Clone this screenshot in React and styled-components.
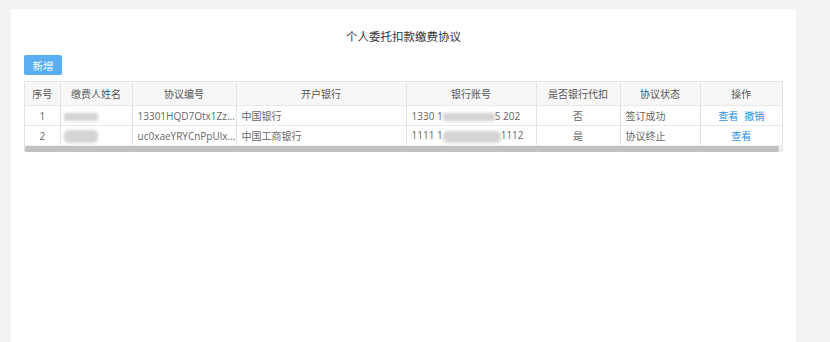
import React from 'react'
import styled, { createGlobalStyle } from 'styled-components'

const GlobalStyle = createGlobalStyle`
  html, body {
    margin: 0;
    padding: 0;
    background: #f3f3f3;
    font-family: 'Open Sans', 'Noto Sans CJK SC', sans-serif;
  }
`

const Page = styled.div`
  display: flex;
  padding: 9px 34px 0 11px;
  height: 342px;
  box-sizing: border-box;
  overflow: hidden;
`

const Panel = styled.div`
  flex: 1;
  background: #fff;
  padding: 20px 13px 0 13px;
  min-height: 333px;
`

const Title = styled.div`
  text-align: center;
  font-size: 11.5px;
  color: #333;
  line-height: 16px;
  height: 26px;
`

const Button = styled.button`
  width: 38px;
  height: 20px;
  border: none;
  border-radius: 2px;
  background: #5aaef2;
  color: #fff;
  font-family: inherit;
  font-size: 10.5px;
  padding: 0;
  display: block;
`

const TableWrap = styled.div`
  margin-top: 6px;
  width: 759px;
  border: 1px solid #e4e4e4;
  border-bottom: none;
  box-sizing: border-box;
`

const Table = styled.table`
  border-collapse: collapse;
  table-layout: fixed;
  width: 100%;
  font-size: 10px;
`

const Th = styled.th`
  height: 23px;
  background: #f7f7f7;
  color: #555;
  font-weight: normal;
  border-left: 1px solid #e4e4e4;
  padding: 0;
  text-align: center;
  &:first-child { border-left: none; }
`

const Td = styled.td`
  height: 19px;
  color: #666;
  border-left: 1px solid #e4e4e4;
  border-top: 1px solid #e8e8e8;
  padding: 0 5px;
  text-align: ${({ $align }) => $align || 'left'};
  white-space: nowrap;
  overflow: hidden;
  &:first-child { border-left: none; }
`

const Blur = styled.span`
  display: inline-block;
  vertical-align: middle;
  width: ${({ $w }) => $w}px;
  height: ${({ $h }) => $h || 9}px;
  background: #d4d4d4;
  filter: blur(1.5px);
  border-radius: ${({ $round }) => ($round ? '5px' : '1px')};
`

const Link = styled.span`
  color: #2f90df;
  margin: 0 3px;
  cursor: pointer;
`

const ScrollTrack = styled.div`
  height: 7px;
  background: #f0f0f0;
  display: flex;
  align-items: center;
  padding-right: 3px;
`

const Thumb = styled.div`
  flex: 1;
  height: 6px;
  background: #c2c2c2;
  border-radius: 2px;
`

const cols = [35, 72, 104, 170, 130, 84, 80, 82]
const heads = ['序号', '缴费人姓名', '协议编号', '开户银行', '银行账号', '是否银行代扣', '协议状态', '操作']

const rows = [
  { no: 1, code: '13301HQD7Otx1Zz...', bank: '中国银行', pre: '1330 1', post: '5 202', sign: '否', status: '签订成功', ops: ['查看', '撤销'], round: false },
  { no: 2, code: 'uc0xaeYRYCnPpUlx...', bank: '中国工商银行', pre: '1111 1', post: '1112', sign: '是', status: '协议终止', ops: ['查看'], round: true }
]

const App = () => (
  <>
    <GlobalStyle />
    <Page>
      <Panel>
        <Title>个人委托扣款缴费协议</Title>
        <Button>新增</Button>
        <TableWrap>
          <Table>
            <colgroup>
              {cols.map((w, i) => <col key={i} style={{ width: w }} />)}
            </colgroup>
            <thead>
              <tr>{heads.map((h) => <Th key={h}>{h}</Th>)}</tr>
            </thead>
            <tbody>
              {rows.map((r) => (
                <tr key={r.no}>
                  <Td $align='center'>{r.no}</Td>
                  <Td style={{ paddingLeft: 3 }}><Blur $w={34} $h={r.round ? 13 : 8} $round={r.round} /></Td>
                  <Td>{r.code}</Td>
                  <Td>{r.bank}</Td>
                  <Td>{r.pre}<Blur $w={r.round ? 58 : 52} $h={r.round ? 12 : 8} $round={r.round} />{r.post}</Td>
                  <Td $align='center'>{r.sign}</Td>
                  <Td>{r.status}</Td>
                  <Td $align='center'>{r.ops.map((o) => <Link key={o}>{o}</Link>)}</Td>
                </tr>
              ))}
            </tbody>
          </Table>
          <ScrollTrack><Thumb /></ScrollTrack>
        </TableWrap>
      </Panel>
    </Page>
  </>
)

export default App
